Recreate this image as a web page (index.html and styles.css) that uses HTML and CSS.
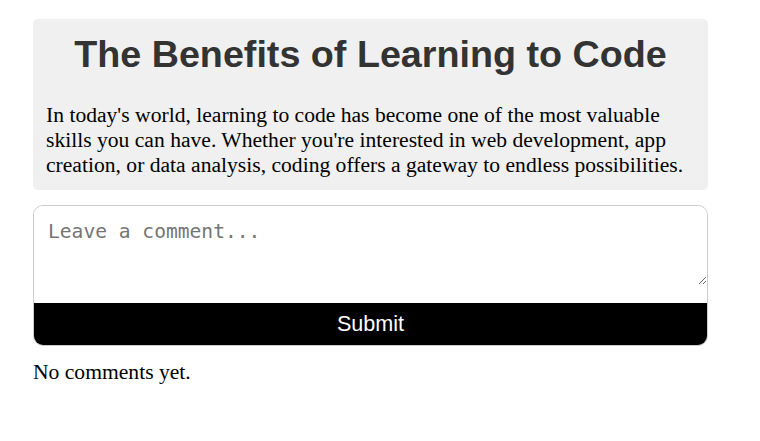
FILE: index.html
```html
<!DOCTYPE html>
<html>
<head>
<meta charset="utf-8">
<link rel="stylesheet" href="styles.css">
</head>
<body>
<main class="page">
  <article class="article">
    <h1 class="title">The Benefits of Learning to Code</h1>
    <p class="text">In today's world, learning to code has become one of the most valuable skills you can have. Whether you're interested in web development, app creation, or data analysis, coding offers a gateway to endless possibilities.</p>
  </article>
  <form class="comment-form">
    <textarea class="comment-input" placeholder="Leave a comment..."></textarea>
    <button type="button" class="submit">Submit</button>
  </form>
  <div class="comments">No comments yet.</div>
</main>
</body>
</html>
```
FILE: styles.css
```css
html, body {
  margin: 0;
  padding: 0;
  background: #fff;
}
body {
  font-family: "Liberation Serif", "Times New Roman", serif;
  font-size: 21.6px;
  color: #000;
}
.page {
  width: 675px;
  margin: 19px 0 0 33px;
  display: flex;
  flex-direction: column;
}
.article {
  background: #f0f0f0;
  border-radius: 5px;
  padding: 13px 13px 12px;
}
.title {
  margin: 0 0 27px;
  font-family: "Liberation Sans", Arial, sans-serif;
  font-size: 37.7px;
  font-weight: bold;
  color: #333;
  text-align: center;
  line-height: 44px;
}
.text {
  margin: 0;
  line-height: 25px;
}
.comment-form {
  margin-top: 15px;
  border: 1px solid #ccc;
  border-radius: 10px;
  overflow: hidden;
  display: flex;
  flex-direction: column;
}
.comment-input {
  display: block;
  box-sizing: border-box;
  width: 100%;
  height: 79px;
  margin: 0 0 18px;
  border: none;
  outline: none;
  padding: 14px 14px;
  font-family: "DejaVu Sans Mono", monospace;
  font-size: 19.6px;
  resize: vertical;
  background: #fff;
}
.comment-input::placeholder {
  color: #757575;
}
.submit {
  display: block;
  width: 100%;
  height: 42px;
  border: none;
  margin: 0;
  background: #000;
  color: #fff;
  font-family: "Liberation Sans", Arial, sans-serif;
  font-size: 21.6px;
  cursor: pointer;
}
.comments {
  margin-top: 14px;
  line-height: 24px;
}
```
